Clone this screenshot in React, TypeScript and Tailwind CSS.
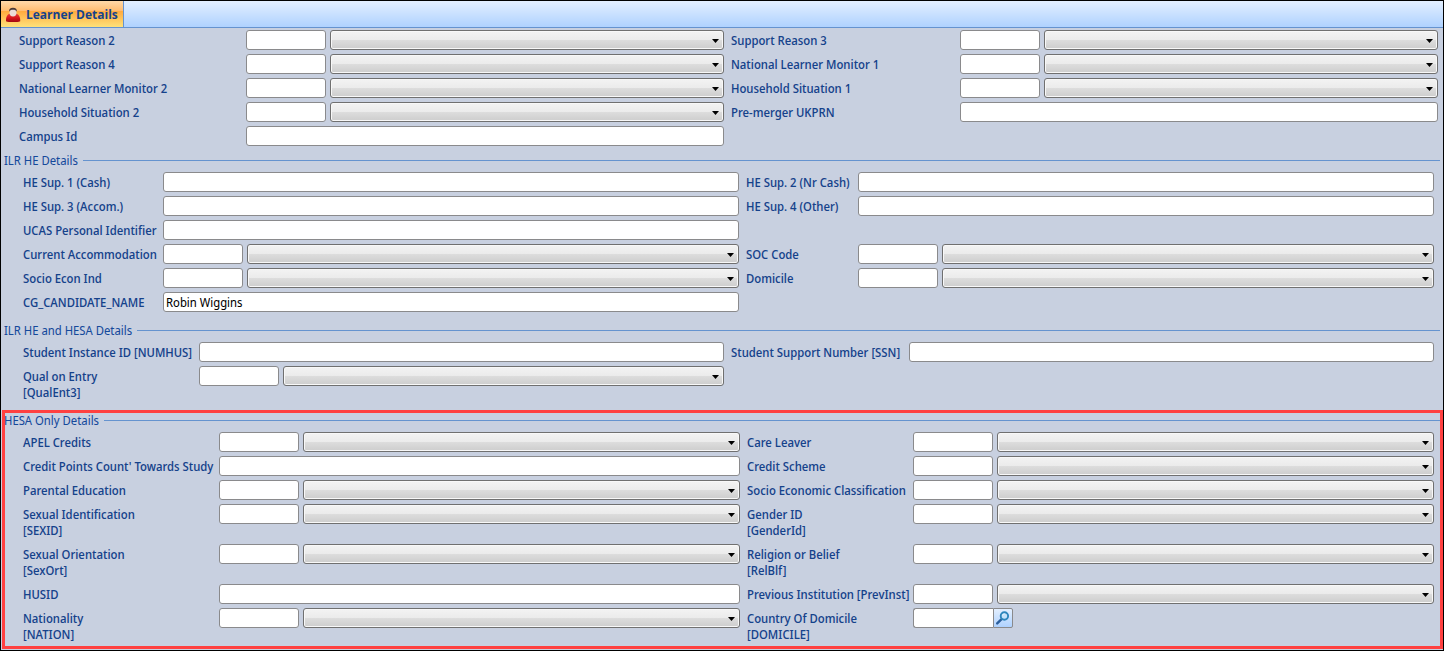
import { useId, type ReactNode } from "react";

type FieldKind = "text" | "lookup" | "search";

interface FieldSpec {
  label: string;
  code?: string;
  kind: FieldKind;
  value?: string;
}

const text = (label: string, value?: string): FieldSpec => ({ label, kind: "text", value });
const lookup = (label: string, code?: string): FieldSpec => ({ label, code, kind: "lookup" });

const supportFields: FieldSpec[] = [
  lookup("Support Reason 2"),
  lookup("Support Reason 3"),
  lookup("Support Reason 4"),
  lookup("National Learner Monitor 1"),
  lookup("National Learner Monitor 2"),
  lookup("Household Situation 1"),
  lookup("Household Situation 2"),
  text("Pre-merger UKPRN"),
  text("Campus Id"),
];

const heFieldsTop: FieldSpec[] = [
  text("HE Sup. 1 (Cash)"),
  text("HE Sup. 2 (Nr Cash)"),
  text("HE Sup. 3 (Accom.)"),
  text("HE Sup. 4 (Other)"),
  text("UCAS Personal Identifier"),
];

const heFieldsBottom: FieldSpec[] = [
  lookup("Current Accommodation"),
  lookup("SOC Code"),
  lookup("Socio Econ Ind"),
  lookup("Domicile"),
  text("CG_CANDIDATE_NAME", "Robin Wiggins"),
];

const heHesaFields: FieldSpec[] = [
  text("Student Instance ID [NUMHUS]"),
  text("Student Support Number [SSN]"),
  lookup("Qual on Entry", "[QualEnt3]"),
];

const hesaFields: FieldSpec[] = [
  lookup("APEL Credits"),
  lookup("Care Leaver"),
  text("Credit Points Count' Towards Study"),
  lookup("Credit Scheme"),
  lookup("Parental Education"),
  lookup("Socio Economic Classification"),
  lookup("Sexual Identification", "[SEXID]"),
  lookup("Gender ID", "[GenderId]"),
  lookup("Sexual Orientation", "[SexOrt]"),
  lookup("Religion or Belief", "[RelBlf]"),
  text("HUSID"),
  lookup("Previous Institution [PrevInst]"),
  lookup("Nationality", "[NATION]"),
  { label: "Country Of Domicile", code: "[DOMICILE]", kind: "search" },
];

const inputClass =
  "h-5 rounded-[3px] border border-[#8a8a8c] bg-white px-0.5 text-xs leading-4 text-black outline-none focus:border-[#3c7fb1]";

function DropDown({ label }: { label: string }) {
  return (
    <div className="relative h-5 min-w-0 flex-1">
      <select
        aria-label={`${label} description`}
        className="block h-5 w-full appearance-none rounded-[3px] border border-[#707070] bg-[linear-gradient(#f3f3f3,#ebebeb_50%,#dddddd_50%,#cdcdcd)] px-1 text-xs shadow-[inset_0_0_0_1px_#f8f8f8] outline-none"
      >
        <option value=""></option>
      </select>
      <svg
        className="pointer-events-none absolute top-[9px] right-[5px] h-1 w-[7px]"
        viewBox="0 0 7 4"
        aria-hidden="true"
      >
        <path d="M0 0H7L3.5 4Z" fill="#000" />
      </svg>
    </div>
  );
}

function SearchIcon() {
  return (
    <svg className="size-4" viewBox="0 0 16 16" fill="none" aria-hidden="true">
      <path d="M6.6 9.2L2.2 13.4" stroke="#2b5f9e" strokeWidth="2.4" strokeLinecap="round" />
      <circle cx="9.4" cy="6" r="3.7" fill="#c4e2fb" stroke="#2c86bd" strokeWidth="1.9" />
      <path d="M7.4 5.6A2.2 2.2 0 0 1 9.6 3.9" stroke="#e6f4ff" strokeWidth="0.9" />
    </svg>
  );
}

function Field({ spec, second }: { spec: FieldSpec; second: boolean }) {
  const id = useId();
  return (
    <>
      <label
        htmlFor={id}
        className={`pt-[3px] pb-px text-xs leading-4 font-medium whitespace-nowrap text-[#15428b] ${second ? "pl-[7px]" : ""}`}
      >
        {spec.label}
        {spec.code && <span className="block">{spec.code}</span>}
      </label>
      {spec.kind === "text" && (
        <input id={id} type="text" defaultValue={spec.value} className={`w-full min-w-0 ${inputClass}`} />
      )}
      {spec.kind === "lookup" && (
        <div className="flex min-w-0 gap-1">
          <input id={id} type="text" className={`w-20 ${inputClass}`} />
          <DropDown label={spec.label} />
        </div>
      )}
      {spec.kind === "search" && (
        <div className="flex min-w-0">
          <input id={id} type="text" className={`w-20 rounded-r-none border-r-0 ${inputClass}`} />
          <button
            type="button"
            aria-label={`Find ${spec.label}`}
            className="flex h-5 w-5 items-center justify-center rounded-r-[2px] border border-[#8a8a8c] bg-linear-to-b from-[#e3efff] to-[#afd2ff]"
          >
            <SearchIcon />
          </button>
        </div>
      )}
    </>
  );
}

function FieldGrid({ fields, className }: { fields: FieldSpec[]; className: string }) {
  return (
    <div className={`grid items-start gap-y-1 ${className}`}>
      {fields.map((spec, index) => (
        <Field key={spec.label} spec={spec} second={index % 2 === 1} />
      ))}
    </div>
  );
}

function Section({ title, className, children }: { title: string; className: string; children: ReactNode }) {
  return (
    <section className={className}>
      <div className="mb-1 flex h-4 items-center gap-[5px] px-[3px]">
        <h2 className="mt-0.5 text-xs leading-4 font-normal text-[#15499b]">{title}</h2>
        <div className="h-px flex-1 bg-[#6593cf]" />
      </div>
      {children}
    </section>
  );
}

function LearnerIcon() {
  return (
    <svg className="size-4" viewBox="0 0 16 16" aria-hidden="true">
      <defs>
        <linearGradient id="coat" x1="0" y1="0" x2="0" y2="1">
          <stop offset="0" stopColor="#e2403a" />
          <stop offset="0.5" stopColor="#d8141c" />
          <stop offset="1" stopColor="#9c0810" />
        </linearGradient>
      </defs>
      <path
        d="M1 14.2C0.8 10.2 2 7.4 5 6.8H11C14 7.4 15.4 10.2 15.2 14.2C12.4 15.4 3.8 15.4 1 14.2Z"
        fill="url(#coat)"
      />
      <ellipse cx="8" cy="5.4" rx="3.5" ry="4" fill="#ecdcd8" />
      <path d="M4.1 4.8C3.7 2 5.4 0.8 8 0.8S12.3 2 11.9 4.8C11 3.4 10 2.8 8 2.8S5 3.4 4.1 4.8Z" fill="#4b3a36" />
    </svg>
  );
}

export default function App() {
  return (
    <div className="min-h-screen border border-black bg-[#c8d0e0] font-['Noto_Sans_Display','Noto_Sans',sans-serif]">
      <header
        role="tablist"
        className="flex h-[27px] border-b border-[#6593cf] bg-linear-to-b from-[#e3efff] to-[#afd2ff]"
      >
        <button
          type="button"
          role="tab"
          aria-selected="true"
          className="flex items-center gap-[5px] border-r border-[#6593cf] bg-[linear-gradient(#ffd9aa,#ffbb6e_39%,#ffab3f_40%,#fee17a)] pt-px pr-[5px] pl-1 font-['Open_Sans','Noto_Sans',sans-serif] text-xs leading-4 font-bold text-[#15428b]"
        >
          <LearnerIcon />
          Learner Details
        </button>
      </header>
      <main className="pt-0.5 pb-1.5">
        <FieldGrid fields={supportFields} className="grid-cols-[227px_1fr_236px_1fr] pr-[5px] pl-[18px]" />
        <Section title="ILR HE Details" className="mt-1.5">
          <div className="flex flex-col gap-1">
            <FieldGrid fields={heFieldsTop} className="grid-cols-[140px_1fr_119px_1fr] pr-[9px] pl-[22px]" />
            <FieldGrid fields={heFieldsBottom} className="grid-cols-[140px_1fr_119px_1fr] pr-[9px] pl-[22px]" />
          </div>
        </Section>
        <Section title="ILR HE and HESA Details" className="mt-2.5">
          <FieldGrid fields={heHesaFields} className="grid-cols-[176px_1fr_185px_1fr] pr-[9px] pl-[22px]" />
        </Section>
        <Section title="HESA Only Details" className="relative mt-2.5">
          <FieldGrid fields={hesaFields} className="grid-cols-[196px_1fr_173px_1fr] pr-[9px] pl-[22px]" />
          <div className="pointer-events-none absolute -top-0.5 right-0 -bottom-[5px] left-px border-[3px] border-[#ff4040]" />
        </Section>
      </main>
    </div>
  );
}
